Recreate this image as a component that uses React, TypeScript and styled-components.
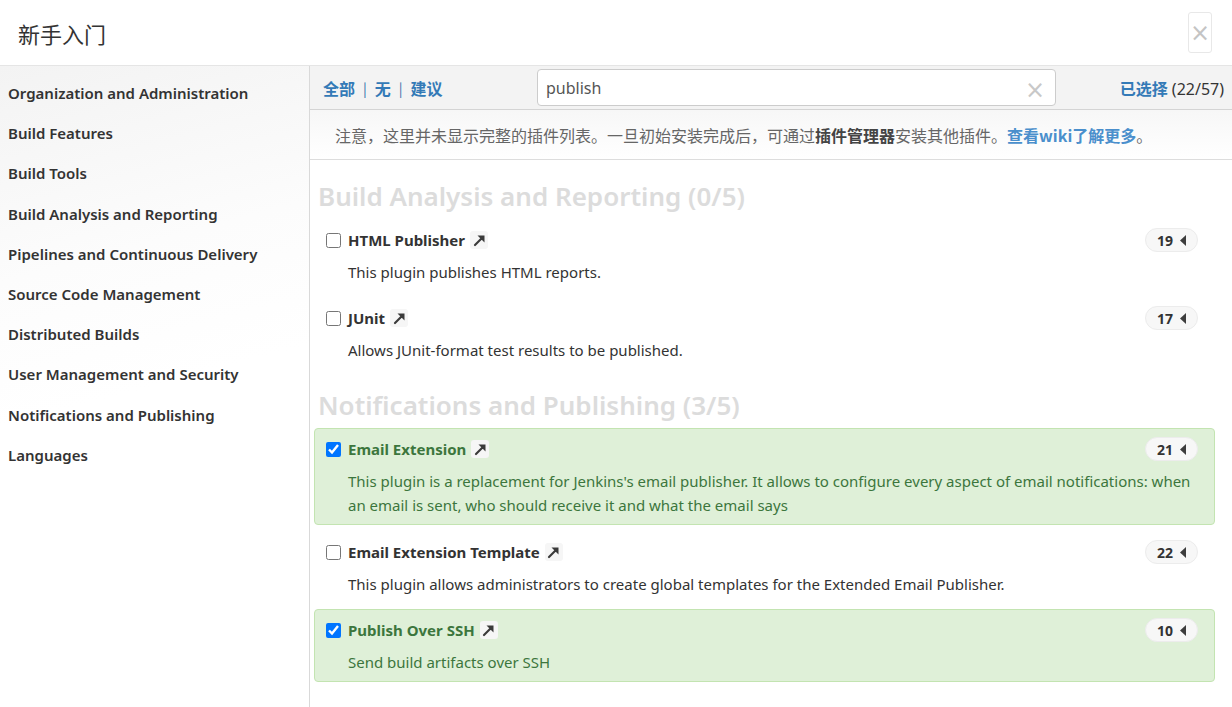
import React from 'react';
import styled, {createGlobalStyle} from 'styled-components';

const GlobalStyle = createGlobalStyle`
  html, body {
    margin: 0;
    padding: 0;
    background: #fff;
  }
  body {
    font-family: "Noto Sans", "Noto Sans CJK SC", sans-serif;
    color: #333;
  }
  * {
    box-sizing: border-box;
  }
`;

const Page = styled.div`
  height: 707px;
  display: flex;
  flex-direction: column;
  overflow: hidden;
`;

const Header = styled.div`
  height: 66px;
  flex: none;
  display: flex;
  align-items: center;
  justify-content: space-between;
  padding: 0 20px 0 18px;
  border-bottom: 1px solid #e5e5e5;
`;

const Title = styled.h4`
  margin: 0;
  font-size: 22px;
  font-weight: 400;
  color: #333;
  font-family: "Noto Sans CJK SC", sans-serif;
`;

const CloseButton = styled.button`
  width: 24px;
  height: 41px;
  padding: 0;
  border: 1px solid #e8e8e8;
  border-radius: 3px;
  background: #fff;
  color: #c4c4c4;
  font-size: 24px;
  line-height: 1;
  font-family: "DejaVu Sans", sans-serif;
`;

const Body = styled.div`
  flex: 1;
  display: flex;
  min-height: 0;
`;

const Sidebar = styled.nav`
  width: 310px;
  flex: none;
  border-right: 1px solid #d9d9d9;
  background: linear-gradient(165deg, #f3f3f3 0%, #fcfcfc 30%, #fff 50%);
  padding-top: 7px;
`;

const SideItem = styled.div`
  height: 40.2px;
  line-height: 40px;
  padding-left: 8px;
  font-size: 15px;
  font-weight: 600;
  color: #333;
  white-space: nowrap;
`;

const Main = styled.div`
  flex: 1;
  display: flex;
  flex-direction: column;
  min-width: 0;
`;

const Toolbar = styled.div`
  height: 44px;
  flex: none;
  display: grid;
  grid-template-columns: 214px 519px 1fr;
  align-items: center;
  padding-left: 13px;
  padding-right: 8px;
  background: #f3f3f3;
  border-bottom: 1px solid #d4d4d4;
`;

const Links = styled.div`
  display: flex;
  align-items: center;
  gap: 8px;
  font-size: 16px;
  font-weight: 600;
  color: #337ab7;
  font-family: "Noto Sans CJK SC", sans-serif;
`;

const Sep = styled.span`
  font-weight: 400;
  font-size: 14px;
  color: #2f6fa8;
`;

const SearchBox = styled.div`
  height: 37px;
  display: flex;
  align-items: center;
  justify-content: space-between;
  padding: 0 10px 0 8px;
  background: #fff;
  border: 1px solid #ccc;
  border-radius: 4px;
  font-size: 16px;
  color: #555;
`;

const ClearMark = styled.span`
  color: #c8c8c8;
  font-size: 24px;
  line-height: 1;
  margin-top: 4px;
  font-family: "DejaVu Sans", sans-serif;
`;

const SelectedCount = styled.div`
  justify-self: end;
  font-size: 16px;
  color: #333;
  white-space: nowrap;

  b {
    font-weight: 600;
    color: #337ab7;
    font-family: "Noto Sans CJK SC", sans-serif;
    margin-right: 4px;
  }
`;

const Notice = styled.div`
  height: 50px;
  flex: none;
  display: flex;
  align-items: center;
  padding-left: 25px;
  background: linear-gradient(to bottom, #f7f7f7, #fff);
  border-bottom: 1px solid #ddd;
  font-size: 16px;
  color: #666;
  font-family: "Noto Sans CJK SC", sans-serif;

  strong {
    color: #444;
    font-weight: 700;
  }

  a {
    color: #4a8fcc;
    font-weight: 600;
    text-decoration: none;
  }
`;

const Content = styled.div`
  flex: 1;
  overflow: hidden;
  padding: 0 17px 0 4px;
`;

const Category = styled.h2`
  margin: 21px 0 7px 4px;
  font-size: 26px;
  line-height: 32px;
  font-weight: 600;
  color: #dcdcdc;
  white-space: nowrap;

  &:first-child {
    margin-top: 20px;
  }
`;

const PluginRow = styled.div<{ $selected?: boolean }>`
  position: relative;
  margin-bottom: ${p => (p.$selected ? '6px' : '7px')};
  padding: 9px 16px ${p => (p.$selected ? '7px' : '5px')} 11px;
  border: 1px solid ${p => (p.$selected ? '#c3e4b1' : 'transparent')};
  border-radius: 4px;
  background: ${p => (p.$selected ? '#dff0d8' : 'transparent')};
  color: ${p => (p.$selected ? '#3c763d' : '#333')};
`;

const RowHead = styled.div`
  height: 22px;
  display: flex;
  align-items: center;
`;

const Check = styled.input`
  width: 15px;
  height: 15px;
  margin: 0 7px 0 0;
`;

const PluginName = styled.span`
  font-size: 15px;
  font-weight: 700;
`;

const WikiIcon = styled.span`
  width: 18px;
  height: 18px;
  margin-left: 5px;
  display: inline-flex;
  align-items: center;
  justify-content: center;
  border-radius: 3px;
  background: #f6f6f6;
`;

const Badge = styled.span`
  margin-left: auto;
  width: 53px;
  height: 24px;
  display: inline-flex;
  align-items: center;
  justify-content: center;
  gap: 7px;
  border: 1px solid #ececec;
  border-radius: 12px;
  background: #f7f7f7;
  font-size: 14px;
  font-weight: 700;
  color: #333;
`;

const Description = styled.div`
  margin-top: 9px;
  padding-left: 22px;
  font-size: 15px;
  line-height: 24px;
`;

type Plugin = {
  name: string;
  description: string;
  deps: number;
  selected?: boolean;
};

type Group = {
  title: string;
  count: string;
  plugins: Plugin[];
};

const sidebarItems = [
  'Organization and Administration',
  'Build Features',
  'Build Tools',
  'Build Analysis and Reporting',
  'Pipelines and Continuous Delivery',
  'Source Code Management',
  'Distributed Builds',
  'User Management and Security',
  'Notifications and Publishing',
  'Languages',
];

const groups: Group[] = [
  {
    title: 'Build Analysis and Reporting',
    count: '(0/5)',
    plugins: [
      {name: 'HTML Publisher', description: 'This plugin publishes HTML reports.', deps: 19},
      {name: 'JUnit', description: 'Allows JUnit-format test results to be published.', deps: 17},
    ],
  },
  {
    title: 'Notifications and Publishing',
    count: '(3/5)',
    plugins: [
      {
        name: 'Email Extension',
        description:
          "This plugin is a replacement for Jenkins's email publisher. It allows to configure every aspect of email notifications: when an email is sent, who should receive it and what the email says",
        deps: 21,
        selected: true,
      },
      {
        name: 'Email Extension Template',
        description: 'This plugin allows administrators to create global templates for the Extended Email Publisher.',
        deps: 22,
      },
      {name: 'Publish Over SSH', description: 'Send build artifacts over SSH', deps: 10, selected: true},
    ],
  },
];

const ArrowIcon = () => (
  <svg width="13" height="13" viewBox="0 0 13 13">
    <path d="M2 11 L8.5 4.5" stroke="#3a3a3a" strokeWidth="2.2" strokeLinecap="round" />
    <path d="M4.5 1.5 H11.5 V8.5 Z" fill="#3a3a3a" />
  </svg>
);

const Caret = () => (
  <svg width="6" height="11" viewBox="0 0 6 11">
    <path d="M6 0 V11 L0 5.5 Z" fill="#3d3d3d" />
  </svg>
);

export default function App() {
  return (
    <Page>
      <GlobalStyle />
      <Header>
        <Title>新手入门</Title>
        <CloseButton>×</CloseButton>
      </Header>
      <Body>
        <Sidebar>
          {sidebarItems.map(item => (
            <SideItem key={item}>{item}</SideItem>
          ))}
        </Sidebar>
        <Main>
          <Toolbar>
            <Links>
              <span>全部</span>
              <Sep>|</Sep>
              <span>无</span>
              <Sep>|</Sep>
              <span>建议</span>
            </Links>
            <SearchBox>
              <span>publish</span>
              <ClearMark>×</ClearMark>
            </SearchBox>
            <SelectedCount>
              <b>已选择</b>(22/57)
            </SelectedCount>
          </Toolbar>
          <Notice>
            <span>
              注意，这里并未显示完整的插件列表。一旦初始安装完成后，可通过<strong>插件管理器</strong>安装其他插件。
              <a href="#">查看wiki了解更多</a>。
            </span>
          </Notice>
          <Content>
            {groups.map(group => (
              <React.Fragment key={group.title}>
                <Category>
                  {group.title} {group.count}
                </Category>
                {group.plugins.map(plugin => (
                  <PluginRow key={plugin.name} $selected={plugin.selected}>
                    <RowHead>
                      <Check type="checkbox" defaultChecked={plugin.selected} />
                      <PluginName>{plugin.name}</PluginName>
                      <WikiIcon>
                        <ArrowIcon />
                      </WikiIcon>
                      <Badge>
                        {plugin.deps}
                        <Caret />
                      </Badge>
                    </RowHead>
                    <Description>{plugin.description}</Description>
                  </PluginRow>
                ))}
              </React.Fragment>
            ))}
          </Content>
        </Main>
      </Body>
    </Page>
  );
}
